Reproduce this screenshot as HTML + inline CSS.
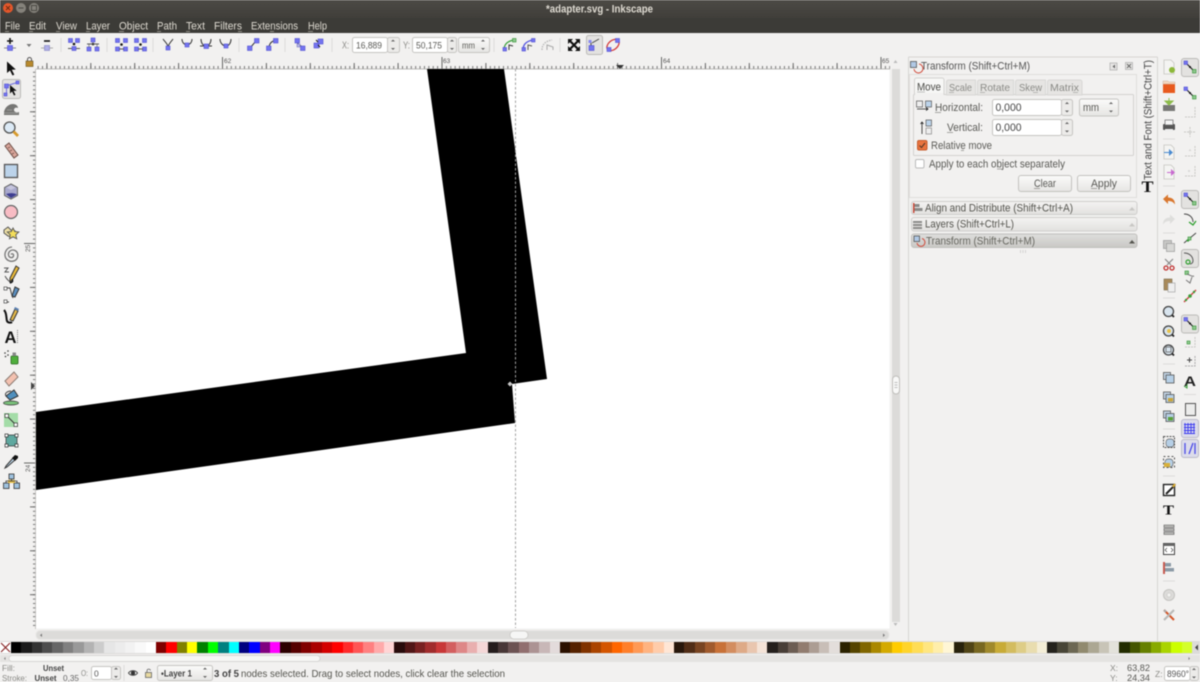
<!DOCTYPE html>
<html><head><meta charset="utf-8"><title>adapter.svg - Inkscape</title>
<style>
html,body{margin:0;padding:0;background:#f2f1f0;}
#w{position:relative;width:1200px;height:682px;overflow:hidden;background:#f2f1f0;filter:blur(.4px);}
svg{position:absolute;left:0;top:0;}
#p{position:absolute;left:11px;top:642px;height:11px;display:flex;}
#p i{display:block;flex:none;width:10.36px;height:11px;}
text{font-family:"Liberation Sans",sans-serif;font-size:11px;fill:#4a4a46;}
.m{fill:#dfdbd2;font-size:11px;}
.d{fill:#8a8a86;font-size:10px;}
.s{fill:#5a5a56;font-size:9.5px;}
.r{fill:#555;font-size:6.5px;}
.n{fill:#7474f0;stroke:#5050d0;stroke-width:.6;}
.nf{fill:#b0b0e8;stroke:#8080c0;stroke-width:.6;}
.g{fill:#8fc88f;stroke:#2f8f2f;stroke-width:.6;}
.b{fill:#e3e2e0;stroke:#bcbbb8;stroke-width:1;}
.i{fill:#fff;stroke:#c6c5c2;stroke-width:1;}
.sep{stroke:#dcdbd9;stroke-width:1;}
.f{fill:none;stroke:#c9c8c5;stroke-width:1;stroke-dasharray:2 1;}
</style></head><body><div id="w">
<svg width="1200" height="682" viewBox="0 0 1200 682" xmlns="http://www.w3.org/2000/svg">
<defs>
<linearGradient id="tb" x1="0" y1="0" x2="0" y2="1"><stop offset="0" stop-color="#4c4a45"/><stop offset="1" stop-color="#403e3a"/></linearGradient>
<linearGradient id="btn" x1="0" y1="0" x2="0" y2="1"><stop offset="0" stop-color="#fbfbfa"/><stop offset="1" stop-color="#e6e5e3"/></linearGradient>
<linearGradient id="exp" x1="0" y1="0" x2="0" y2="1"><stop offset="0" stop-color="#f4f3f2"/><stop offset="1" stop-color="#e2e1df"/></linearGradient>
<linearGradient id="exp2" x1="0" y1="0" x2="0" y2="1"><stop offset="0" stop-color="#dededc"/><stop offset="1" stop-color="#c9c8c5"/></linearGradient>
<pattern id="hs" patternUnits="userSpaceOnUse" x="222" y="57" width="4.39" height="12"><rect x="0" y="9" width="1" height="3" fill="#777"/></pattern>
<pattern id="hm" patternUnits="userSpaceOnUse" x="222" y="57" width="43.9" height="12"><rect x="0" y="6" width="1" height="6" fill="#666"/></pattern>
<pattern id="hl" patternUnits="userSpaceOnUse" x="222" y="57" width="219.5" height="12"><rect x="0" y="0" width="1" height="12" fill="#666"/></pattern>
<pattern id="vs" patternUnits="userSpaceOnUse" x="24" y="23.5" width="12" height="4.39"><rect x="9" y="0" width="3" height="1" fill="#777"/></pattern>
<pattern id="vm" patternUnits="userSpaceOnUse" x="24" y="23.5" width="12" height="43.9"><rect x="6" y="0" width="6" height="1" fill="#666"/></pattern>
<pattern id="vl" patternUnits="userSpaceOnUse" x="24" y="23.5" width="12" height="219.5"><rect x="0" y="0" width="12" height="1" fill="#666"/></pattern>
<g id="snap"><path d="M-4 -4L4 4" stroke="#222" stroke-width="1.2"/><rect x="-6" y="-6" width="3.5" height="3.5" class="n"/><rect x="2.5" y="2.5" width="3.5" height="3.5" class="g"/><circle r="1" fill="#111"/></g>
<g id="spin"><path d="M-2 -3.5L0 -5.5L2 -3.500M-2 3L0 5L2 3" fill="#666" stroke="none"/></g>
<g id="doc"><path d="M-5 -7H2L5 -4V7H-5Z" fill="#f4f4f2" stroke="#c5c5c0" stroke-width=".8"/></g>
</defs>

<!-- title bar -->
<rect width="1200" height="18" fill="url(#tb)"/>
<rect y="18" width="1200" height="15" fill="#3c3b37"/>
<circle cx="8" cy="8" r="5" fill="#e4572b"/><path d="M6 6l4 4M10 6l-4 4" stroke="#6a2a12" stroke-width=".9"/>
<circle cx="21" cy="8" r="5" fill="#85827b"/><path d="M18.5 8h5" stroke="#4a4944" stroke-width="1"/>
<circle cx="34" cy="8" r="5" fill="#85827b"/><rect x="31.5" y="5.5" width="5" height="5" fill="none" stroke="#4a4944"/>
<text class="m" x="546" y="12.5" textLength="107" lengthAdjust="spacingAndGlyphs" style="font-weight:bold;font-size:11px">*adapter.svg - Inkscape</text>
<text class="m" x="5" y="29.5" textLength="15" lengthAdjust="spacingAndGlyphs">File</text>
<text class="m" x="29" y="29.5" textLength="17" lengthAdjust="spacingAndGlyphs">Edit</text>
<text class="m" x="56" y="29.5" textLength="21" lengthAdjust="spacingAndGlyphs">View</text>
<text class="m" x="86" y="29.5" textLength="24" lengthAdjust="spacingAndGlyphs">Layer</text>
<text class="m" x="119" y="29.5" textLength="29" lengthAdjust="spacingAndGlyphs">Object</text>
<text class="m" x="157" y="29.5" textLength="20" lengthAdjust="spacingAndGlyphs">Path</text>
<text class="m" x="186" y="29.5" textLength="19" lengthAdjust="spacingAndGlyphs">Text</text>
<text class="m" x="214" y="29.5" textLength="28" lengthAdjust="spacingAndGlyphs">Filters</text>
<text class="m" x="251" y="29.5" textLength="47" lengthAdjust="spacingAndGlyphs">Extensions</text>
<text class="m" x="308" y="29.5" textLength="19" lengthAdjust="spacingAndGlyphs">Help</text>
<path d="M5 31.5h4M29 31.5h4M56 31.5h4M86 31.5h4M119 31.5h5M157 31.5h4M186 31.5h4M238 31.5h4M270 31.5h4M308 31.5h5" stroke="#dfdbd2" stroke-width=".6"/>

<!-- command toolbar -->
<path d="M7 41h6M10 38v6" stroke="#111" stroke-width="1.600"/><path d="M4 48h12" stroke="#888"/><rect x="7.500" y="45.500" width="5" height="5" class="n"/>
<path d="M26.500 44h5l-2.500 3z" fill="#777"/>
<path d="M44 41h6" stroke="#111" stroke-width="1.600"/><path d="M41 48h12" stroke="#aaa"/><rect x="44.500" y="45.500" width="5" height="5" class="nf"/>
<rect x="68.500" y="38.500" width="4" height="4" class="n"/><rect x="75.500" y="38.500" width="4" height="4" class="n"/><circle cx="74" cy="44" r="1.300" fill="#111"/><path d="M68 48.500h12" stroke="#555"/><rect x="72" y="46.500" width="4" height="4" class="n"/>
<rect x="91" y="38" width="4" height="4" class="n"/><circle cx="93" cy="44" r="1.300" fill="#111"/><path d="M87 44h12" stroke="#555"/><rect x="87" y="47" width="4" height="4" class="n"/><rect x="95" y="47" width="4" height="4" class="n"/><path d="M89 47v-3M97 47v-3" stroke="#555" stroke-width=".6"/>
<g id="t2"><rect x="115.500" y="38.500" width="4" height="4" class="n"/><rect x="123.500" y="38.500" width="4" height="4" class="n"/><rect x="115.500" y="47" width="4" height="4" class="n"/><rect x="123.500" y="47" width="4" height="4" class="n"/><circle cx="121.500" cy="44.500" r="1.300" fill="#111"/><path d="M119 49h5" stroke="#555"/></g>
<use href="#t2" x="19"/>
<path d="M163 39c2 3 5 5 5 8M173 39c-2 3-4 4-5 8" fill="none" stroke="#333"/><rect x="166" y="46" width="4" height="4" class="n"/>
<path d="M182 39c0 4 3 6 5 6s5-2 5-6" fill="none" stroke="#333"/><rect x="185" y="43" width="4" height="4" class="n"/>
<path d="M201 39c0 4 2 7 5 7s5-3 5-7M200 46h12" fill="none" stroke="#333"/><rect x="204" y="44" width="4.500" height="4.500" class="n"/>
<path d="M220 39c0 4 3 7 6 7s5-3 5-7" fill="none" stroke="#333"/><rect x="224" y="44" width="4" height="4" class="n"/>
<path d="M250 48L256 41" stroke="#333"/><rect x="247.500" y="46" width="4.500" height="4.500" class="n"/><rect x="254.500" y="38.500" width="4.500" height="4.500" class="n"/>
<path d="M269 48c0-5 3-7 7-8" fill="none" stroke="#333"/><rect x="266.500" y="46" width="4.500" height="4.500" class="n"/><rect x="273.500" y="38.500" width="4.500" height="4.500" class="n"/>
<path d="M297 41c1 6 5 3 6 8" fill="none" stroke="#333"/><rect x="295" y="38.500" width="4.500" height="4.500" class="n"/><rect x="300.500" y="46" width="4.500" height="4.500" class="n"/><rect x="297" y="44" width="3" height="3" class="nf"/>
<rect x="314" y="43" width="5" height="5" class="n"/><rect x="318" y="39" width="5" height="5" class="n"/><path d="M316 40l2 2M320 47l-2-2" stroke="#111"/>
<path class="sep" d="M61 38v14M107 38v14M153 38v14M239 38v14M285 38v14M332 38v14M494 38v14M560 38v14"/>

<text class="d" x="342" y="48.500" textLength="7" lengthAdjust="spacingAndGlyphs">X:</text>
<rect x="352.500" y="37.500" width="35" height="15" rx="2" class="i"/><rect x="387.500" y="37.500" width="12" height="15" rx="2" fill="#ecebe9" stroke="#c6c5c2"/>
<text class="s" x="356" y="48.500" textLength="26" lengthAdjust="spacingAndGlyphs">16,889</text><use href="#spin" x="393" y="45"/>
<text class="d" x="403" y="48.500" textLength="7" lengthAdjust="spacingAndGlyphs">Y:</text>
<rect x="412.500" y="37.500" width="35" height="15" rx="2" class="i"/><rect x="447.500" y="37.500" width="9" height="15" rx="2" fill="#ecebe9" stroke="#c6c5c2"/>
<text class="s" x="416" y="48.500" textLength="26" lengthAdjust="spacingAndGlyphs">50,175</text><use href="#spin" x="452" y="45"/>
<rect x="458.500" y="37.500" width="31" height="15" rx="2" fill="url(#btn)" stroke="#c6c5c2"/>
<text class="s" x="462" y="48.500" textLength="13" lengthAdjust="spacingAndGlyphs">mm</text><use href="#spin" x="483" y="45"/>

<path d="M504 50c0-6 4-9 10-10" fill="none" stroke="#3aa03a" stroke-width="1.200"/><rect x="503" y="47.500" width="3.500" height="3.500" class="n"/><rect x="512.500" y="38.500" width="3.500" height="3.500" class="g"/><path d="M509 50v-5l4 1" fill="none" stroke="#333"/>
<path d="M523 50c0-6 4-9 10-10" fill="none" stroke="#5555e0" stroke-width="1.300"/><rect x="522" y="47.500" width="3.500" height="3.500" class="n"/><rect x="531.500" y="38.500" width="3.500" height="3.500" class="n"/><path d="M528 50v-5l4 1" fill="none" stroke="#555"/>
<path d="M542 50c0-6 4-9 10-10" fill="none" stroke="#bbb" stroke-width="1.400" stroke-dasharray="1.500 1"/><path d="M547 50v-5l6 2v3" fill="none" stroke="#aaa"/>
<path d="M570 41l8 8M578 41l-8 8" stroke="#111" stroke-width="2.200"/><path d="M568 39h5l-5 5zM580 39v5l-5-5zM568 51v-5l5 5zM580 51h-5l5-5z" fill="#111"/>
<rect x="586.500" y="35.500" width="16" height="19" rx="2" class="b"/><path d="M591 47v-5M592 43l7-4" stroke="#444" fill="none"/><rect x="589" y="45.500" width="5" height="5" class="n"/><rect x="588.500" y="40" width="3" height="3" fill="#8888f0"/>
<ellipse cx="613" cy="45" rx="7" ry="4.500" transform="rotate(-40 613 45)" fill="none" stroke="#d43a3a" stroke-width="1.300"/><rect x="607" y="47.500" width="4" height="4" class="n"/><rect x="615.500" y="38.500" width="4" height="4" class="n"/>

<!-- rulers -->
<rect x="36" y="57" width="854" height="12" fill="url(#hs)"/>
<rect x="36" y="57" width="854" height="12" fill="url(#hm)"/>
<rect x="36" y="57" width="854" height="12" fill="url(#hl)"/>
<rect x="24" y="69" width="12" height="560" fill="url(#vs)"/>
<rect x="24" y="69" width="12" height="560" fill="url(#vm)"/>
<rect x="24" y="69" width="12" height="560" fill="url(#vl)"/>
<text class="r" x="224" y="63">62</text><text class="r" x="443" y="63">63</text><text class="r" x="663" y="63">64</text><text class="r" x="882" y="63">65</text>
<text class="r" transform="translate(30 252) rotate(-90)">25</text><text class="r" transform="translate(30 472) rotate(-90)">24</text>
<path d="M616 65h8l-4 4z" fill="#333"/><path d="M31 382v8l4-4z" fill="#444"/>
<rect x="26" y="61" width="7" height="5.500" fill="#b98a2c" stroke="#6b5420" stroke-width=".6"/><path d="M27.500 61v-1.500a2 2 0 0 1 4 0V61" fill="none" stroke="#555"/>

<!-- canvas -->
<rect x="36" y="69" width="853.500" height="559.500" fill="#fff"/>
<path d="M36 69h854" stroke="#a8a7a4" stroke-width=".8"/><path d="M35.500 69v560" stroke="#bdbcb9" stroke-width=".8"/>
<path d="M427 69H504L547 379L512 384L515 423L36 490V412L466 353Z" fill="#000"/>
<path d="M515.500 69V628" stroke="#a0a0a0" stroke-width="1" stroke-dasharray="2.500 2"/>
<path d="M510 381.800L512.200 384L510 386.200L507.800 384Z" fill="#c8c8c8" stroke="#fff" stroke-width=".4"/>

<!-- canvas scrollbars -->
<rect x="890" y="57" width="11" height="573" fill="#f2f1f0"/>
<rect x="892" y="69" width="8" height="553" fill="#dcdbd9"/>
<rect x="892.500" y="376" width="7" height="18" rx="3.500" fill="#f8f8f7" stroke="#bfbebb"/><path d="M894.500 382.500h3M894.500 385h3M894.500 387.500h3" stroke="#aaa" stroke-width=".7"/>
<path d="M895.500 60l2 3h-4zM895.500 626l2-3h-4z" fill="#bbb"/>
<rect x="36" y="630.500" width="853" height="9" rx="4" fill="#dcdbd9" stroke="#e8e7e5"/>
<rect x="510" y="631" width="18" height="8" rx="4" fill="#f6f6f5" stroke="#c6c5c2" stroke-width=".7"/>
<path d="M42 633.500v3.500l-2-1.800zM883 633.500v3.500l2-1.800z" fill="#777"/>

<!-- left toolbox -->
<path d="M7 61.500V73l3-2.500 2.500 5 1.800-.9-2.500-4.800 4-.3z" fill="#111"/>
<rect x="2.500" y="79.500" width="18" height="19" rx="2" class="b"/>
<path d="M6 86l11-3.500M6.500 87v7" stroke="#7070e0" fill="none"/><rect x="16" y="81" width="3" height="3" class="n"/><rect x="4.500" y="84" width="4" height="4" class="n"/><rect x="4" y="93" width="3" height="3" class="n"/><path d="M10 85v8.500l2-2 2 4 1.500-.8-2-3.800 3.200-.2z" fill="#111"/>
<path d="M4 115v-3c1-5 5-8 9-8 3 0 5 2 5 4-2-1-4 0-4 2 0 2 3 3 5 2v3z" fill="#767674"/><path d="M4 113h14M7 110h5" stroke="#a5a5a2" stroke-width=".7"/>
<circle cx="9.500" cy="127.500" r="5.500" fill="#dceaf6" stroke="#555" stroke-width="1.300"/><path d="M13.500 131.500l4.500 4.500" stroke="#d79a2c" stroke-width="2.800"/>
<path d="M5 146l4-3 9 12-4 3z" fill="#d9a59a" stroke="#6e5048" stroke-width="1"/><path d="M8 148l2-1M10 151l2-1M12 154l2-1" stroke="#6e5048" stroke-width=".7"/>
<rect x="4.500" y="164.500" width="13" height="13" fill="#bcd3ea" stroke="#555" stroke-width="1.300"/>
<path d="M11 184l6.500 3.500v8L11 199l-6.500-3.500v-8z" fill="#a8a8cc" stroke="#666" stroke-width="1"/><path d="M6 194c4-1 7-1.500 11 .5L11 198z" fill="#3d3d90"/><path d="M6 187.500l5-2.500 5 2.500-5 2.500z" fill="#c5c5dd"/>
<circle cx="11" cy="212" r="6.500" fill="#f8bcc4" stroke="#666" stroke-width="1.200"/>
<path d="M4 230l4-3 3 3 4 1-3 3 0 3-4-1-4-3z" fill="#eee0a6" stroke="#555"/><path d="M13 228l1.800 3.600 4 .4-3 2.800.9 4-3.700-2-3.500 2 .8-4-3-2.800 4-.4z" fill="#f4de5a" stroke="#555" stroke-width=".9"/>
<path d="M11 254.500c1-1.500 3-.5 2.500 1.500-.8 2.500-4.500 2-5-1-.6-3.500 3-6 6.500-4.500 4 2 3.500 8 0 10-4 2-9.500 0-10-5-.4-4 2.500-8.500 7-8.500" fill="none" stroke="#777" stroke-width="1.300"/>
<path d="M4 268h4l-3 4h4M5 276c2 4 5 6 6 6" fill="none" stroke="#555"/><path d="M16 266l3 2-6 11-3 3 0-4z" fill="#e8b93a" stroke="#333"/><path d="M12 279c1 2 1 3-2 4" fill="none" stroke="#111" stroke-width="1.500"/>
<path d="M5 288h5c1 4 2 8 3 10M5 302h4" fill="none" stroke="#444"/><path d="M15 287l4 2-4 8-3-1z" fill="#5b8fc0" stroke="#333"/><rect x="4" y="300" width="3" height="3" fill="#fff" stroke="#444" stroke-width=".7"/><rect x="4" y="287" width="3" height="3" fill="#fff" stroke="#444" stroke-width=".7"/>
<path d="M4 310c3 3 2 8 3 11 1 2 4 2 5 1" fill="none" stroke="#111" stroke-width="2"/><path d="M15 309l3 2-5 10-3-1z" fill="#e3b84a" stroke="#333"/><path d="M14 309l4 2 1-2-4-2z" fill="#5a7fb0"/>
<text x="4.500" y="343" style="font-size:17px;font-weight:bold;fill:#111;" textLength="12" lengthAdjust="spacingAndGlyphs">A</text><path d="M17.500 330v14" stroke="#777" stroke-dasharray="1 1"/>
<circle cx="5" cy="353" r=".8" fill="#333"/><circle cx="8" cy="355" r=".8" fill="#333"/><circle cx="5.500" cy="356.500" r=".8" fill="#333"/><circle cx="8" cy="351" r=".8" fill="#333"/><rect x="11" y="356" width="7" height="8" rx="1" fill="#4fae3c" stroke="#2a6a20" stroke-width=".8"/><rect x="12.500" y="352.500" width="3.500" height="3.500" fill="#888"/>
<path d="M5 381l9-9 4 5-9 9z" fill="#f3c1b0" stroke="#8a7a72"/>
<path d="M6 396l8-6 4 6-8 4z" fill="#4f8fbd" stroke="#333"/><path d="M6 396c-2-3 2-5 5-5" fill="none" stroke="#444"/><ellipse cx="11" cy="403" rx="7.500" ry="2" fill="#7ac17a" stroke="#333" stroke-width=".7"/>
<rect x="4" y="413" width="14" height="14" fill="#a4dca8"/><path d="M7 416l8 8" stroke="#333"/><rect x="5" y="414" width="3.500" height="3.500" fill="#fff" stroke="#333" stroke-width=".7"/><rect x="14" y="423" width="3.500" height="3.500" fill="#fff" stroke="#333" stroke-width=".7"/>
<rect x="6" y="435" width="11" height="11" fill="#5fa89f" stroke="#333" stroke-width=".7"/><path d="M5 434h3v3H5zM15 434h3v3h-3zM5 444h3v3H5zM15 444h3v3h-3z" fill="#fff" stroke="#333" stroke-width=".7"/>
<path d="M6 466l7-8 2 2-8 7-2 1z" fill="#bfd8ea" stroke="#333"/><path d="M12 458l3-3 3 1 0 2-3 3z" fill="#111"/>
<rect x="9" y="474" width="5" height="5" fill="#9fc3e0" stroke="#333" stroke-width=".8"/><rect x="3.500" y="483" width="5.500" height="5.500" fill="#9fc3e0" stroke="#333" stroke-width=".8"/><rect x="14" y="483" width="5.500" height="5.500" fill="#9fc3e0" stroke="#333" stroke-width=".8"/><rect x="8" y="480" width="7" height="3" fill="#e8c24a"/><path d="M11.500 479v2M6 483v-2h11v2" fill="none" stroke="#333" stroke-width=".8"/>

<!-- dock panel -->
<path d="M908.500 57V641M1157.500 57V641M908.500 57H1157.500" fill="none" stroke="#d6d5d3"/>
<rect x="910.500" y="61.500" width="6" height="6" fill="#b0c8e4" stroke="#444" stroke-width=".7"/><path d="M914 69a4.500 4.500 0 1 0 5-5" fill="none" stroke="#d04a3a" stroke-width="1"/>
<text x="921" y="69.500" textLength="109" lengthAdjust="spacingAndGlyphs" style="fill:#555">Transform (Shift+Ctrl+M)</text>
<rect x="1110" y="63" width="7" height="7" fill="#e6e5e3" stroke="#aaa" stroke-width=".7"/><path d="M1115 64.500v4l-2.500-2z" fill="#666"/>
<rect x="1125.500" y="62.500" width="7" height="7" fill="#e6e5e3" stroke="#aaa" stroke-width=".7"/><path d="M1127 64l4 4M1131 64l-4 4" stroke="#666"/>
<rect x="909.500" y="74.500" width="227" height="123" fill="none" stroke="#dfdedc"/>
<rect x="913.500" y="94.500" width="220" height="61" fill="#f2f1f0" stroke="#d3d2d0" rx="1"/>
<path d="M914.500 95V80a2 2 0 0 1 2-2H942a2 2 0 0 1 2 2V95" fill="#f7f7f6" stroke="#d3d2d0"/><rect x="915" y="93" width="28.500" height="3" fill="#f2f1f0"/>
<path d="M946.500 95V82a2 2 0 0 1 2-2H975.500V95zM977.500 95V82a2 2 0 0 1 2-2H1013.500V95zM1015.500 95V82a2 2 0 0 1 2-2H1045.500V95zM1047.500 95V82a2 2 0 0 1 2-2H1080a2 2 0 0 1 2 2V95z" fill="#e6e5e3" stroke="#d8d7d5"/>
<text x="917" y="90.500" textLength="24" lengthAdjust="spacingAndGlyphs">Move</text>
<text class="d" style="font-size:10.500px" x="949" y="91" textLength="23" lengthAdjust="spacingAndGlyphs">Scale</text>
<text class="d" style="font-size:10.500px" x="980" y="91" textLength="30" lengthAdjust="spacingAndGlyphs">Rotate</text>
<text class="d" style="font-size:10.500px" x="1019" y="91" textLength="23" lengthAdjust="spacingAndGlyphs">Skew</text>
<text class="d" style="font-size:10.500px" x="1050" y="91" textLength="29" lengthAdjust="spacingAndGlyphs">Matrix</text>
<path d="M917 92h8M949 92.500h5M980 92.500h5M1033 92.500h5M1073 92.500h5" stroke="#8a8a86" stroke-width=".6"/>
<rect x="916.500" y="101" width="6" height="6" fill="#eee" stroke="#555" stroke-width=".7"/><rect x="925.500" y="101" width="6" height="6" fill="#bcd3ea" stroke="#555" stroke-width=".7"/><path d="M917 109h11M926 107.500l2 1.500-2 1.500" fill="none" stroke="#222" stroke-width=".8"/>
<text x="935" y="111" textLength="48" lengthAdjust="spacingAndGlyphs" style="fill:#5a5a56">Horizontal:</text>
<rect x="992.500" y="99.500" width="69" height="16" rx="2" class="i"/><rect x="1061.500" y="99.500" width="11" height="16" rx="2" fill="#ecebe9" stroke="#c6c5c2"/>
<text x="995.500" y="111" textLength="26" lengthAdjust="spacingAndGlyphs" style="fill:#444">0,000</text><use href="#spin" x="1067" y="107.500"/>
<rect x="1079.500" y="99" width="39" height="17" rx="2" fill="url(#btn)" stroke="#c6c5c2"/>
<text x="1083" y="111" textLength="16" lengthAdjust="spacingAndGlyphs" style="fill:#5a5a56">mm</text><use href="#spin" x="1111" y="107.500"/>
<rect x="926" y="120" width="5.500" height="6" fill="#bcd3ea" stroke="#555" stroke-width=".7"/><rect x="926" y="128" width="5.500" height="6" fill="#eee" stroke="#888" stroke-width=".7"/><path d="M922 134v-12M920.500 124l1.500-2 1.500 2" fill="none" stroke="#222" stroke-width=".8"/>
<text x="947" y="131" textLength="36" lengthAdjust="spacingAndGlyphs" style="fill:#5a5a56">Vertical:</text>
<rect x="992.500" y="119.500" width="69" height="16" rx="2" class="i"/><rect x="1061.500" y="119.500" width="11" height="16" rx="2" fill="#ecebe9" stroke="#c6c5c2"/>
<text x="995.500" y="131" textLength="26" lengthAdjust="spacingAndGlyphs" style="fill:#444">0,000</text><use href="#spin" x="1067" y="127.500"/>
<rect x="917.500" y="140.500" width="9.500" height="9.500" rx="1.500" fill="#e9743f" stroke="#c55c2e"/><path d="M919.500 145.500l2 2 3.500-4.500" fill="none" stroke="#5a3a28" stroke-width="1.100"/>
<text x="931" y="149" textLength="61" lengthAdjust="spacingAndGlyphs" style="fill:#5a5a56">Relative move</text>
<rect x="915.500" y="159.500" width="8.500" height="8.500" rx="1.500" fill="#fff" stroke="#bbb"/>
<text x="929" y="167.500" textLength="136" lengthAdjust="spacingAndGlyphs" style="fill:#5a5a56">Apply to each object separately</text>
<rect x="1018.500" y="175.500" width="53" height="16" rx="2.500" fill="url(#btn)" stroke="#c3c2bf"/>
<text x="1034" y="187" textLength="22" lengthAdjust="spacingAndGlyphs" style="fill:#5a5a56">Clear</text>
<rect x="1077.500" y="175.500" width="53" height="16" rx="2.500" fill="url(#btn)" stroke="#c3c2bf"/>
<text x="1091" y="187" textLength="26" lengthAdjust="spacingAndGlyphs" style="fill:#5a5a56">Apply</text>
<path d="M935 112.500h6M947 132.500h6M961 150.500h3M997 169h5M1034 188.500h6M1091 188.500h6" stroke="#5a5a56" stroke-width=".6"/>

<rect x="911.500" y="201.500" width="225.500" height="13" rx="2.500" fill="url(#exp)" stroke="#cfcecc"/>
<rect x="913" y="203" width="1.500" height="10" fill="#c84a3a"/><rect x="914.500" y="204" width="5" height="3" fill="#8a8a88"/><rect x="914.500" y="208" width="8" height="3" fill="#8a8a88"/>
<text x="925" y="211.500" textLength="148" lengthAdjust="spacingAndGlyphs" style="fill:#55554f">Align and Distribute (Shift+Ctrl+A)</text><path d="M1129 210.500h6l-3-3.500z" fill="#c8c7c4"/>
<rect x="911.500" y="217.500" width="225.500" height="13.500" rx="2.500" fill="url(#exp)" stroke="#cfcecc"/>
<path d="M913 221h9v2h-9zM913 224h9v2h-9zM913 227h9v2h-9z" fill="#8c8c8a"/>
<text x="925" y="227.500" textLength="89" lengthAdjust="spacingAndGlyphs" style="fill:#55554f">Layers (Shift+Ctrl+L)</text><path d="M1129 226.500h6l-3-3.500z" fill="#c8c7c4"/>
<rect x="911.500" y="234" width="225.500" height="13.500" rx="2.500" fill="url(#exp2)" stroke="#c0bfbc"/>
<rect x="914" y="236" width="5.500" height="5.500" fill="#b0c8e4" stroke="#444" stroke-width=".7"/><path d="M917 243a4 4 0 1 0 5-4.500" fill="none" stroke="#d04a3a"/>
<text x="926" y="244.500" textLength="109" lengthAdjust="spacingAndGlyphs" style="fill:#66665f">Transform (Shift+Ctrl+M)</text><path d="M1129 243.500h6l-3-3.500z" fill="#55554f"/>
<path d="M1020.500 250v3M1023 250v3M1025.500 250v3" stroke="#c8c7c4" stroke-width=".7"/>

<text transform="translate(1151.500 180) rotate(-90)" textLength="120" lengthAdjust="spacingAndGlyphs" style="fill:#444">Text and Font (Shift+Ctrl+T)</text>
<text x="1141.500" y="192" style="font-family:'Liberation Serif',serif;font-size:16px;font-weight:bold;fill:#111" textLength="12" lengthAdjust="spacingAndGlyphs">T</text>

<!-- right col 1 -->
<use href="#doc" x="1169" y="67"/><circle cx="1172" cy="70" r="3" fill="#8cb83a"/>
<rect x="1163" y="84" width="12" height="9" fill="#e85a1e"/><path d="M1163 84v-3h5l1 1h6v2z" fill="#f4d8c0" stroke="#c8b0a0" stroke-width=".5"/>
<rect x="1163" y="105" width="12" height="6" fill="#777775"/><path d="M1169 98v3M1165 101h8l-4 4z" fill="#8cbb4a" stroke="#8cbb4a"/>
<rect x="1163" y="124" width="12" height="6" rx="1" fill="#555"/><rect x="1165" y="120" width="8" height="5" fill="#f5f5f5" stroke="#666" stroke-width=".7"/><rect x="1165" y="129" width="8" height="2.500" fill="#eee"/>
<path class="sep" d="M1163 139h12M1163 186h12M1163 233h12M1163 298h12M1163 364h12M1163 429h12M1163 476h12M1163 581h12"/>
<use href="#doc" x="1169" y="152"/><path d="M1164 152h5v-3l4 3.500-4 3.500v-3h-5z" fill="#4a8ad0"/>
<use href="#doc" x="1169" y="172"/><path d="M1167 172h4v-3l4 3.500-4 3.500v-3h-4z" fill="#c86ad0"/>
<path d="M1163 199l5-4.500v3c4 0 7 2 7 7-2-3-4-3.500-7-3.500v3z" fill="#d9772e"/>
<path d="M1175 219l-5-4.500v3c-4 0-7 2-7 7 2-3 4-3.500 7-3.500v3z" fill="#dededc"/>
<rect x="1163.500" y="240.500" width="8" height="8" fill="#c8c8c6" stroke="#999" stroke-width=".7"/><rect x="1166.500" y="243.500" width="8" height="8" fill="#d8d8d6" stroke="#999" stroke-width=".7"/>
<path d="M1165 259l6 6M1173 259l-6 6" stroke="#888" stroke-width="1.200"/><circle cx="1166" cy="268" r="2" fill="none" stroke="#c03030" stroke-width="1.300"/><circle cx="1172" cy="268" r="2" fill="none" stroke="#c03030" stroke-width="1.300"/>
<rect x="1164" y="279" width="8" height="11" fill="#a88a5a" stroke="#7a6a4a" stroke-width=".6"/><rect x="1168" y="283" width="7" height="9" fill="#eee" stroke="#999" stroke-width=".6"/>
<g id="zm"><circle cx="1168.500" cy="311.500" r="5" fill="#d8e4ee" stroke="#444" stroke-width="1.300"/><path d="M1172 315l2 2" stroke="#222" stroke-width="1.800"/></g>
<use href="#zm" y="19.500"/><circle cx="1169" cy="331" r="2" fill="#e8c24a"/><use href="#zm" y="38.500"/><rect x="1166" y="347" width="5" height="5" fill="none" stroke="#666" stroke-width=".8"/>
<g id="cp"><rect x="1163.500" y="372.500" width="7" height="7" fill="#c4d6e8" stroke="#555" stroke-width=".8"/><rect x="1166" y="375" width="8" height="8" fill="#b6cfe6" stroke="#555" stroke-width=".8"/></g>
<use href="#cp" y="19.500"/><rect x="1168" y="398" width="5" height="3.500" fill="#c9a53a"/><use href="#cp" y="38.500"/><rect x="1168" y="417" width="5" height="3.500" fill="#5aa03a"/>
<rect x="1166" y="439" width="8" height="8" rx="3" fill="#b6cfe6" stroke="#666" stroke-width=".7"/><path class="f" style="stroke:#555" d="M1163.500 436.500h11v11h-11z"/>
<rect x="1165" y="459" width="8" height="8" rx="3" fill="#b6cfe6" stroke="#666" stroke-width=".7"/><path d="M1163.500 456.500h11v11h-11z" fill="none" stroke="#555" stroke-dasharray="2 2"/><rect x="1164" y="463" width="6" height="4" fill="#d8b03a"/>
<rect x="1163.500" y="484.500" width="11" height="11" fill="#fff" stroke="#222" stroke-width="1.400"/><path d="M1166 494l7-7 2-3" stroke="#222" stroke-width="2"/><path d="M1173 487l2-3" stroke="#e0b030" stroke-width="2"/>
<text x="1163" y="514.500" style="font-family:'Liberation Serif',serif;font-size:14px;font-weight:bold;fill:#111" textLength="11" lengthAdjust="spacingAndGlyphs">T</text>
<path d="M1164 525h10v2.500h-10zM1164 528.500h10v2.500h-10zM1164 532h10v2.500h-10z" fill="#b8b8b6" stroke="#555" stroke-width=".6"/>
<rect x="1163.500" y="543.500" width="11" height="11" fill="#fff" stroke="#444" stroke-width="1"/><rect x="1163.500" y="543.500" width="11" height="2.500" fill="#666"/><path d="M1167 548l-2 2 2 2M1171 548l2 2-2 2" fill="none" stroke="#444" stroke-width=".7"/>
<rect x="1163" y="562" width="2" height="12" fill="#c85a50"/><rect x="1165" y="563" width="6" height="3.500" fill="#8c9aa6"/><rect x="1165" y="568" width="9" height="3.500" fill="#8c9aa6"/>
<circle cx="1169" cy="595" r="5.500" fill="#dcdbd9" stroke="#c4c3c0"/><circle cx="1169" cy="595" r="2" fill="#f2f1f0" stroke="#c4c3c0" stroke-width=".6"/>
<path d="M1164 610l10 10" stroke="#d4572a" stroke-width="2"/><path d="M1174 610l-10 10" stroke="#b8b8b6" stroke-width="2"/><path d="M1164 610l2 2" stroke="#aaa" stroke-width="2"/>

<!-- right col 2 -->
<rect x="1181.500" y="58.500" width="17" height="18" rx="2.500" class="b"/><use href="#snap" x="1190" y="67"/>
<use href="#snap" x="1190" y="93"/>
<path class="f" d="M1185 117h10v-10"/>
<path class="f" d="M1184 132h12M1190 127v10"/><circle cx="1190" cy="132" r="1.500" fill="#d5d4d2"/>
<path class="f" d="M1185 156h10v-10"/><path d="M1190 149l-1.500 2h3z" fill="#d5d4d2"/>
<path class="f" d="M1185 176h10v-10"/><circle cx="1189" cy="171" r="1" fill="#d5d4d2"/>
<rect x="1181.500" y="190.500" width="17" height="18" rx="2.500" class="b"/><use href="#snap" x="1190" y="199"/>
<path d="M1184 214c5 0 9 3 9 8" fill="none" stroke="#444"/><path d="M1189 222l4 3 3-4" fill="none" stroke="#2f9f2f" stroke-width="1.300"/>
<path d="M1184 243l12-10" stroke="#444"/><path d="M1186 240l3-1 1 1-2 2z" fill="#3aa03a"/><rect x="1188" y="237" width="3" height="3" class="g"/>
<rect x="1181.500" y="249.500" width="17" height="18" rx="2.500" class="b"/><path d="M1184 253c5 0 9 3 9 8 0 2-2 3-3 3" fill="none" stroke="#555"/><circle cx="1188" cy="262" r="2" fill="none" stroke="#2f9f2f" stroke-width="1.200"/>
<rect x="1185" y="271" width="3.500" height="3.500" class="g"/><path d="M1187 274c3 1 5 3 7 2M1192 277l-2 6-4-3" fill="none" stroke="#777"/>
<path d="M1184 302l12-12" stroke="#d04040" stroke-width="1.400"/><circle cx="1190" cy="296" r="1.800" fill="#3aa03a"/><circle cx="1186" cy="300" r="1.200" fill="#3aa03a"/><circle cx="1194" cy="292" r="1.200" fill="#3aa03a"/>
<rect x="1181.500" y="315" width="17" height="18" rx="2.500" class="b"/><use href="#snap" x="1190" y="323.500"/>
<path d="M1185 347h10v-10" fill="none" stroke="#c9c8c5" stroke-dasharray="2 1"/><rect x="1187" y="341" width="3" height="3" class="g"/>
<path d="M1185 366h10v-10" fill="none" stroke="#aaa" stroke-dasharray="2 1"/><path d="M1187 360h5M1189.500 357.500v5" stroke="#444"/>
<text x="1184" y="386" style="font-size:14px;font-weight:bold;fill:#222" textLength="12" lengthAdjust="spacingAndGlyphs">A</text><path d="M1184 386l3 2 0-4" fill="none" stroke="#3aa03a"/>
<path class="sep" d="M1184 394.500h12"/>
<rect x="1185.500" y="403.500" width="10" height="12" fill="#ececeb" stroke="#555"/>
<rect x="1181.500" y="419.500" width="17" height="18" rx="2.500" fill="#dcdcea" stroke="#bcbbc8"/>
<path d="M1185 423v11M1188 423v11M1191 423v11M1194 423v11M1184 424.500h11M1184 427.500h11M1184 430.500h11M1184 433.500h11" stroke="#3a3af0" stroke-width=".9"/>
<rect x="1181.500" y="439.500" width="17" height="18" rx="2.500" fill="#dcdcea" stroke="#bcbbc8"/>
<path d="M1185 443v11M1189 454l4-11M1195 443v11" stroke="#4a4ae8" stroke-width="1.300"/>

<!-- palette background -->
<rect x="0" y="641" width="1200" height="13" fill="#dcdbd9"/>
<rect x="0" y="642" width="11" height="11" fill="#fff"/><path d="M1 643l9 9M10 643l-9 9" stroke="#8a2a2a" stroke-width="1.200"/>
<path d="M1198 644.500v6l-3-3z" fill="#444"/>

<!-- palette scrollbar -->
<rect x="0" y="655" width="1200" height="7" fill="#e4e3e1"/>
<rect x="9" y="655.500" width="311" height="6" rx="3" fill="#f6f6f5" stroke="#d0cfcd" stroke-width=".7"/>
<path d="M5.500 657v3l-1.500-1.500zM1188.500 657v3l1.500-1.500z" fill="#777"/>

<!-- status bar -->
<text x="2" y="671" style="font-size:8px;fill:#8a8a86" textLength="13" lengthAdjust="spacingAndGlyphs">Fill:</text>
<text x="2" y="681" style="font-size:8px;fill:#8a8a86" textLength="25" lengthAdjust="spacingAndGlyphs">Stroke:</text>
<text x="43" y="671" style="font-size:8px;font-weight:bold;fill:#444" textLength="21" lengthAdjust="spacingAndGlyphs">Unset</text>
<text x="34.500" y="681" style="font-size:8px;font-weight:bold;fill:#444" textLength="22" lengthAdjust="spacingAndGlyphs">Unset</text>
<text x="63" y="681" style="font-size:8px;fill:#666" textLength="16" lengthAdjust="spacingAndGlyphs">0,35</text>
<text x="81" y="676" style="font-size:8.500px;fill:#8a8a86" textLength="7" lengthAdjust="spacingAndGlyphs">O:</text>
<rect x="91.500" y="666.500" width="20" height="13" rx="2" class="i"/><rect x="111.500" y="666.500" width="9" height="13" rx="2" fill="#ecebe9" stroke="#c6c5c2"/>
<text x="94" y="676.500" style="font-size:8.500px;fill:#555">0</text><use href="#spin" x="116" y="673"/>
<path class="sep" d="M124 665v16"/>
<path d="M128.500 673c2-3 7-3 9 0-2 3-7 3-9 0z" fill="#fff" stroke="#444"/><circle cx="133" cy="673" r="2.200" fill="#333"/>
<rect x="145.500" y="672.500" width="6" height="5" fill="#e8d9a0" stroke="#666" stroke-width=".8"/><path d="M147 672.500v-2a1.800 1.800 0 0 1 3.500 0" fill="none" stroke="#666" stroke-width=".8"/>
<rect x="157.500" y="665.500" width="55" height="15" rx="2" fill="url(#btn)" stroke="#c6c5c2"/>
<text x="161" y="676.500" style="font-size:9.500px;font-weight:bold;fill:#444" textLength="31" lengthAdjust="spacingAndGlyphs">•Layer 1</text><use href="#spin" x="205" y="673"/>
<text x="214" y="677" style="font-size:10.500px;font-weight:bold;fill:#444" textLength="25" lengthAdjust="spacingAndGlyphs">3 of 5</text>
<text x="241" y="677" style="font-size:10.500px;fill:#55554f" textLength="264" lengthAdjust="spacingAndGlyphs">nodes selected. Drag to select nodes, click clear the selection</text>
<text x="1110" y="671" style="font-size:8.500px;fill:#8a8a86">X:</text>
<text x="1110" y="681" style="font-size:8.500px;fill:#8a8a86">Y:</text>
<text x="1127" y="671" style="font-size:9.500px;fill:#5a5a56" textLength="23" lengthAdjust="spacingAndGlyphs">63,82</text>
<text x="1127" y="681" style="font-size:9.500px;fill:#5a5a56" textLength="23" lengthAdjust="spacingAndGlyphs">24,34</text>
<text x="1155" y="677" style="font-size:8.500px;fill:#8a8a86">Z:</text>
<rect x="1164.500" y="666.500" width="25.500" height="14" rx="2" class="i"/><rect x="1190" y="666.500" width="8.500" height="14" rx="2" fill="#ecebe9" stroke="#c6c5c2"/>
<text x="1167" y="677" style="font-size:9px;fill:#555" textLength="22" lengthAdjust="spacingAndGlyphs">8960°</text><use href="#spin" x="1194" y="673.500"/>
</svg>
<div id="p"><i style="background:#000"></i><i style="background:#1a1a1a"></i><i style="background:#333"></i><i style="background:#4d4d4d"></i><i style="background:#666"></i><i style="background:#808080"></i><i style="background:#999"></i><i style="background:#b3b3b3"></i><i style="background:#ccc"></i><i style="background:#e6e6e6"></i><i style="background:#ececec"></i><i style="background:#f2f2f2"></i><i style="background:#f9f9f9"></i><i style="background:#fff"></i><i style="background:#800000"></i><i style="background:#f00"></i><i style="background:#808000"></i><i style="background:#ff0"></i><i style="background:#008000"></i><i style="background:#0f0"></i><i style="background:#008080"></i><i style="background:#0ff"></i><i style="background:#000080"></i><i style="background:#00f"></i><i style="background:#800080"></i><i style="background:#f0f"></i><i style="background:#2b0000"></i><i style="background:#550000"></i><i style="background:#800000"></i><i style="background:#aa0000"></i><i style="background:#d40000"></i><i style="background:#f00"></i><i style="background:#ff2a2a"></i><i style="background:#f55"></i><i style="background:#ff8080"></i><i style="background:#faa"></i><i style="background:#ffd5d5"></i><i style="background:#280b0b"></i><i style="background:#501616"></i><i style="background:#782121"></i><i style="background:#a02c2c"></i><i style="background:#c83737"></i><i style="background:#d35f5f"></i><i style="background:#de8787"></i><i style="background:#e9afaf"></i><i style="background:#f4d7d7"></i><i style="background:#241c1c"></i><i style="background:#483737"></i><i style="background:#6c5353"></i><i style="background:#916f6f"></i><i style="background:#ac9393"></i><i style="background:#c8b7b7"></i><i style="background:#e3dbdb"></i><i style="background:#2b1100"></i><i style="background:#552200"></i><i style="background:#803300"></i><i style="background:#aa4400"></i><i style="background:#d45500"></i><i style="background:#f60"></i><i style="background:#ff7f2a"></i><i style="background:#f95"></i><i style="background:#ffb380"></i><i style="background:#fca"></i><i style="background:#ffe6d5"></i><i style="background:#28170b"></i><i style="background:#502d16"></i><i style="background:#784421"></i><i style="background:#a05a2c"></i><i style="background:#c87137"></i><i style="background:#d38d5f"></i><i style="background:#deaa87"></i><i style="background:#e9c6af"></i><i style="background:#f4e3d7"></i><i style="background:#241f1c"></i><i style="background:#483e37"></i><i style="background:#6c5d53"></i><i style="background:#917c6f"></i><i style="background:#ac9d93"></i><i style="background:#c8beb7"></i><i style="background:#e3dedb"></i><i style="background:#2b2200"></i><i style="background:#554400"></i><i style="background:#806600"></i><i style="background:#aa8800"></i><i style="background:#d4aa00"></i><i style="background:#fc0"></i><i style="background:#ffd42a"></i><i style="background:#fd5"></i><i style="background:#ffe680"></i><i style="background:#fea"></i><i style="background:#fff6d5"></i><i style="background:#28220b"></i><i style="background:#504416"></i><i style="background:#786721"></i><i style="background:#a0892c"></i><i style="background:#c8ab37"></i><i style="background:#d3bc5f"></i><i style="background:#decd87"></i><i style="background:#e9ddaf"></i><i style="background:#f4eed7"></i><i style="background:#24221c"></i><i style="background:#484537"></i><i style="background:#6c6753"></i><i style="background:#918a6f"></i><i style="background:#aca793"></i><i style="background:#c8c4b7"></i><i style="background:#e3e2db"></i><i style="background:#222b00"></i><i style="background:#445500"></i><i style="background:#668000"></i><i style="background:#88aa00"></i><i style="background:#aad400"></i><i style="background:#cf0"></i><i style="background:#d4ff2a"></i></div>
</div></body></html>
